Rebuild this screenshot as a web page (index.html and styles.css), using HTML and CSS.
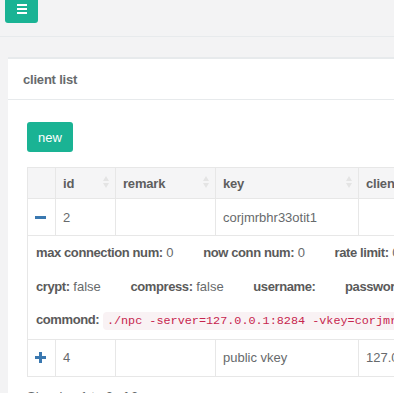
FILE: index.html
```html
<!DOCTYPE html>
<html>
    <head>
        <title>client list</title>
        <link rel="stylesheet" href="styles.css">
    </head>
    <body>
        <div class="topbar">
            <a class="menu_btn">
                <svg width="12" height="10" viewBox="0 0 12 10">
                    <rect x="1" y="0" width="10" height="2" fill="#fff"/>
                    <rect x="1" y="4" width="10" height="2" fill="#fff"/>
                    <rect x="1" y="8" width="10" height="2" fill="#fff"/>
                </svg>
            </a>
        </div>
        <div class="wrapper">
            <div class="ibox">
                <div class="ibox_title">client list</div>
                <div class="ibox_content">
                    <button class="btn_new" type="button">new</button>
                    <table class="list">
                        <tr>
                            <th class="col_detail"></th>
                            <th class="col_id"><span>id</span><i class="sort"></i></th>
                            <th class="col_remark"><span>remark</span><i class="sort"></i></th>
                            <th class="col_key"><span>key</span><i class="sort"></i></th>
                            <th class="col_client"><span>client addr</span><i class="sort"></i></th>
                        </tr>
                        <tr>
                            <td class="col_detail">
                                <svg class="toggle" width="11" height="11" viewBox="0 0 11 11"><rect x="0" y="4" width="11" height="3" fill="#3a78b0"/></svg>
                            </td>
                            <td>2</td>
                            <td></td>
                            <td>corjmrbhr33otit1</td>
                            <td></td>
                        </tr>
                        <tr class="detail">
                            <td colspan="5">
                                <div class="detail_line">
                                    <span class="item"><b>max connection num:</b> 0</span>
                                    <span class="item"><b>now conn num:</b> 0</span>
                                    <span class="item"><b>rate limit:</b> 0 KB/s</span>
                                </div>
                                <div class="detail_line">
                                    <span class="item"><b>crypt:</b> false</span>
                                    <span class="item"><b>compress:</b> false</span>
                                    <span class="item"><b>username:</b></span>
                                    <span class="item"><b>password:</b></span>
                                </div>
                                <div class="detail_line">
                                    <b>commond:</b> <code>./npc -server=127.0.0.1:8284 -vkey=corjmrbhr33otit1</code>
                                </div>
                            </td>
                        </tr>
                        <tr>
                            <td class="col_detail">
                                <svg class="toggle" width="11" height="11" viewBox="0 0 11 11"><rect x="0" y="4" width="11" height="3" fill="#3a78b0"/><rect x="4" y="0" width="3" height="11" fill="#3a78b0"/></svg>
                            </td>
                            <td>4</td>
                            <td></td>
                            <td>public vkey</td>
                            <td>127.0.0.1</td>
                        </tr>
                    </table>
                    <p class="pagination_info">Showing 1 to 2 of 2 rows</p>
                </div>
            </div>
        </div>
    </body>
</html>
```

FILE: styles.css
```css
body {
	margin : 0;
	background-color : #f3f3f4;
	font-family : "Liberation Sans", Arial, sans-serif;
	font-size : 13px;
	color : #676a6c;
	overflow : hidden;
}

.topbar {
	height : 36px;
	border-bottom : 1px solid #e7eaec;
	display : flex;
	align-items : flex-start;
}
	.menu_btn {
		display : flex;
		align-items : center;
		justify-content : center;
		margin : -7px 0 0 5px;
		width : 33px;
		height : 30px;
		padding-top : 2px;
		box-sizing : border-box;
		background-color : #1ab394;
		border-radius : 3px;
	}

.wrapper {
	padding : 20px 0 0 8px;
}

.ibox {
	background-color : #fff;
	border-top : 2px solid #e7eaec;
	overflow : hidden;
}
	.ibox_title {
		height : 40px;
		padding : 0 15px;
		display : flex;
		align-items : center;
		font-weight : bold;
		letter-spacing : -0.2px;
		color : #676a6c;
		border-bottom : 1px solid #e7eaec;
	}
	.ibox_content {
		padding : 22px 0 0 19px;
	}

.btn_new {
	width : 46px;
	height : 30px;
	border : none;
	border-radius : 3px;
	background-color : #1ab394;
	color : #fff;
	font-family : inherit;
	font-size : 13px;
	padding : 0;
}

table.list {
	margin-top : 15px;
	border-collapse : collapse;
	table-layout : fixed;
	width : 500px;
	border : 1px solid #e7e7e7;
}
	table.list th {
		height : 31px;
		padding : 0 5px 0 7px;
		background-color : #f5f5f6;
		border : 1px solid #e7e7e7;
		text-align : left;
		font-weight : bold;
		letter-spacing : -0.2px;
		color : #5e5e5e;
		white-space : nowrap;
		overflow : hidden;
	}
	table.list th span {
		vertical-align : middle;
	}
	table.list td {
		height : 36px;
		padding : 0 8px 0 7px;
		border : 1px solid #e7e7e7;
		color : #676a6c;
		white-space : nowrap;
		overflow : hidden;
	}
	.col_detail { width : 28px; box-sizing : border-box; }
	.col_id { width : 60px; box-sizing : border-box; }
	.col_remark { width : 100px; box-sizing : border-box; }
	.col_key { width : 143px; box-sizing : border-box; }
	.col_client { width : 169px; box-sizing : border-box; }

	table.list td.col_detail {
		padding : 0 0 0 7px;
	}
	.toggle {
		display : block;
	}

.sort {
	float : right;
	width : 7px;
	height : 12px;
	margin-top : 1px;
	position : relative;
}
	.sort::before, .sort::after {
		content : '';
		position : absolute;
		left : 0;
		border-left : 3.5px solid transparent;
		border-right : 3.5px solid transparent;
	}
	.sort::before {
		top : 0;
		border-bottom : 5px solid #e4e4e4;
	}
	.sort::after {
		bottom : 0;
		border-top : 5px solid #e4e4e4;
	}

tr.detail td {
	height : auto;
	padding : 0 8px;
}
	.detail_line {
		line-height : 33.5px;
		white-space : nowrap;
	}
	.detail_line b {
		color : #5a5a5a;
		letter-spacing : -0.4px;
	}
	.item {
		margin-right : 26px;
	}
	code {
		font-family : "Liberation Mono", monospace;
		font-size : 11.8px;
		color : #c7254e;
		background-color : #f9f2f4;
		padding : 2px 4px;
		border-radius : 4px;
	}

.pagination_info {
	margin : 10px 0 0 0;
	line-height : 20px;
	color : #676a6c;
}
```
